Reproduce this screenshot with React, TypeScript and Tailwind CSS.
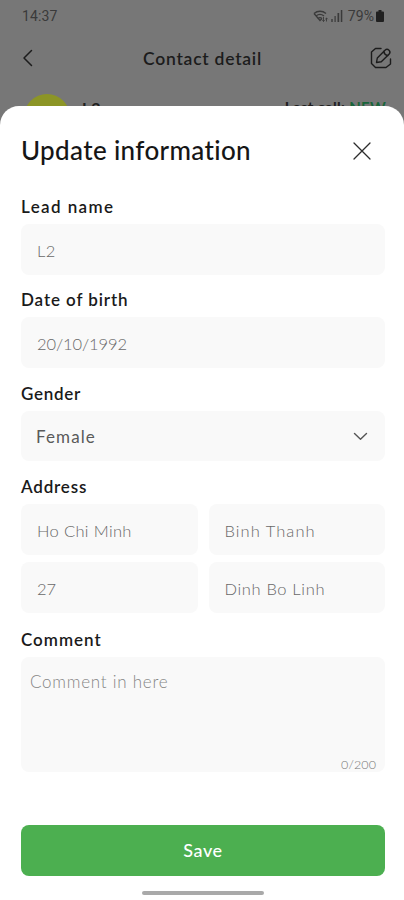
import React, { useState } from 'react';

const Label: React.FC<{ text: string; className: string }> = ({ text, className }) => (
    <label className={`block h-5 whitespace-nowrap text-[17px] leading-[21px] font-semibold text-[#1a1a1a] ${className}`}>{text}</label>
);

const Field: React.FC<{ initial: string; className: string }> = ({ initial, className }) => {
    const [value, setValue] = useState(initial);
    return (
        <input
            value={value}
            onChange={e => setValue(e.target.value)}
            className={`block w-full min-w-0 rounded-lg bg-[#f9f9f9] px-4 pt-[2px] text-[16.5px] font-light text-[#686868] outline-none ${className}`}
        />
    );
};

const StatusBar: React.FC = () => (
    <div className="flex h-8 items-center justify-between pl-[22px] pr-5 font-[Roboto,sans-serif] text-[14px] text-[#3a3a3a]">
        <span className="tracking-[0.1px]">14:37</span>
        <div className="flex items-center">
            <svg width="16" height="14" viewBox="0 0 16 14" fill="none" stroke="currentColor" strokeWidth="1.3" className="mr-[2px]">
                <path d="M1 4.5C4.5 1.5 9.5 1.5 13 4.5M3 7C5.5 5 8.5 5 11 7M5 9.5C6.5 8.3 7.5 8.3 9 9.5" />
                <path d="M1 4.5L7 11.5L9 9.5" />
                <path d="M10.5 8V12.5M9.3 11.3L10.5 12.5L11.7 11.3M13.5 12.5V9M12.3 10.2L13.5 9L14.7 10.2" strokeWidth="0.9" />
            </svg>
            <svg width="12" height="12" viewBox="0 0 12 12" fill="currentColor" className="mr-[5px]">
                <rect x="0" y="9" width="2" height="3" opacity="0.7" />
                <rect x="3.3" y="6" width="1.7" height="6" opacity="0.7" />
                <rect x="6.5" y="3" width="1.7" height="9" />
                <rect x="9.8" y="0" width="1.5" height="12" />
            </svg>
            <span className="tracking-[0.1px]">79%</span>
            <svg width="8" height="12" viewBox="0 0 8 12" fill="#202020" className="ml-[2px]">
                <path d="M2.5 0H5.5V1.5H7A1 1 0 0 1 8 2.5V11A1 1 0 0 1 7 12H1A1 1 0 0 1 0 11V2.5A1 1 0 0 1 1 1.5H2.5Z" />
            </svg>
        </div>
    </div>
);

const ContactHeader: React.FC = () => (
    <div className="flex h-[54px] items-center justify-between pl-[22px] pr-3 text-[#1c1c1c]">
        <svg width="13" height="18" viewBox="0 0 13 18" fill="none" stroke="currentColor" strokeWidth="1.5" strokeLinecap="round" strokeLinejoin="round" className="-mt-[2px]">
            <path d="M9.5 1.5L2 9L9.5 16.5" />
        </svg>
        <h1 className="text-[17.5px] font-semibold tracking-[0.75px]">Contact detail</h1>
        <svg width="22" height="22" viewBox="0 0 22 22" fill="none" stroke="currentColor" strokeWidth="1.4" strokeLinecap="round" strokeLinejoin="round" className="-mt-[2px]">
            <path d="M11 1.5H5.5L1.5 5V16.5L5.5 20.5H16L20.5 17V12" />
            <path d="M6.5 15.5L7.3 11L15 3.2A2.7 2.7 0 0 1 19 7.2L11.3 14.7Z" />
            <path d="M13.7 4.5C14.2 6.8 15.4 8 17.7 8.5" />
        </svg>
    </div>
);

export default function App() {
    const [comment, setComment] = useState('');

    return (
        <div className="relative flex h-[900px] w-[404px] flex-col overflow-hidden bg-[#777777] font-[Lato,sans-serif]">
            <StatusBar />
            <ContactHeader />
            {/* contact row, mostly hidden behind the sheet */}
            <div className="flex h-5 items-start overflow-hidden pl-[24px] pr-[18px]">
                <div className="mt-2 h-[46px] w-[46px] shrink-0 rounded-full bg-[#8c9526]" />
                <span className="mt-[12px] ml-3 text-[16px] leading-5 font-bold tracking-[1px] text-[#202020]">L2</span>
                <span className="mt-[11px] ml-auto text-[15px] leading-5 font-bold tracking-[0.3px] text-[#202020]">
                    Last call: <span className="text-[#17653a]">NEW</span>
                </span>
            </div>

            <div className="flex flex-1 flex-col rounded-t-[19px] bg-white pr-[19px] pl-[21px]">
                <div className="flex h-[90px] items-center justify-between pr-[13px]">
                    <h2 className="-mt-[2px] text-[26px] font-medium tracking-[0.35px] text-[#161616]">Update information</h2>
                    <button type="button" aria-label="Close">
                        <svg width="20" height="20" viewBox="0 0 20 20" fill="none" stroke="#2c2c2c" strokeWidth="1.3" strokeLinecap="round">
                            <path d="M2 2L18 18M18 2L2 18" />
                        </svg>
                    </button>
                </div>

                <Label text="Lead name" className="tracking-[1.4px]" />
                <Field initial="L2" className="mt-2 h-[51px] tracking-[0.5px]" />
                <Label text="Date of birth" className="mt-[14px] tracking-[0.9px]" />
                <Field initial="20/10/1992" className="mt-2 h-[51px] tracking-[-0.1px]" />
                <Label text="Gender" className="mt-[15px] tracking-[0.7px]" />
                <div className="mt-2 flex h-[50px] items-center justify-between rounded-lg bg-[#f9f9f9] pl-[15px] pr-[17px]">
                    <span className="mt-px text-[17px] tracking-[1.1px] text-[#5a5a5a]">Female</span>
                    <svg width="15" height="9" viewBox="0 0 15 9" fill="none" stroke="#555555" strokeWidth="1.4" strokeLinecap="round" strokeLinejoin="round">
                        <path d="M1.5 1.5L7.5 7.2L13.5 1.5" />
                    </svg>
                </div>
                <Label text="Address" className="mt-[15px] tracking-[0.8px]" />
                <div className="mt-2 grid grid-cols-2 gap-x-[11px] gap-y-[7px]">
                    <Field initial="Ho Chi Minh" className="h-[51px] tracking-[0.35px]" />
                    <Field initial="Binh Thanh" className="h-[51px] tracking-[1.05px]" />
                    <Field initial="27" className="h-[51px]" />
                    <Field initial="Dinh Bo Linh" className="h-[51px] tracking-[0.65px]" />
                </div>
                <Label text="Comment" className="mt-[16px] tracking-[1px]" />
                <div className="mt-2 flex h-[115px] flex-col rounded-lg bg-[#f9f9f9] px-[9px] pt-[15px]">
                    <textarea
                        value={comment}
                        maxLength={200}
                        onChange={e => setComment(e.target.value)}
                        placeholder="Comment in here"
                        className="block w-full flex-1 resize-none text-[17px] leading-5 font-light tracking-[0.75px] text-[#5a5a5a] outline-none placeholder:text-[#858585]"
                    />
                    <span className="self-end text-[12.5px] leading-[14px] font-light tracking-[0.1px] text-[#777777]">{comment.length}/200</span>
                </div>

                <button type="button" className="mt-[53px] h-[51px] shrink-0 rounded-lg bg-[#4caf50] text-[18px] font-medium tracking-[0.6px] text-white">Save</button>
                <div className="mx-auto mt-[15px] h-1 w-[122px] shrink-0 rounded-full bg-[#a9a9a9]" />
            </div>
        </div>
    );
}
